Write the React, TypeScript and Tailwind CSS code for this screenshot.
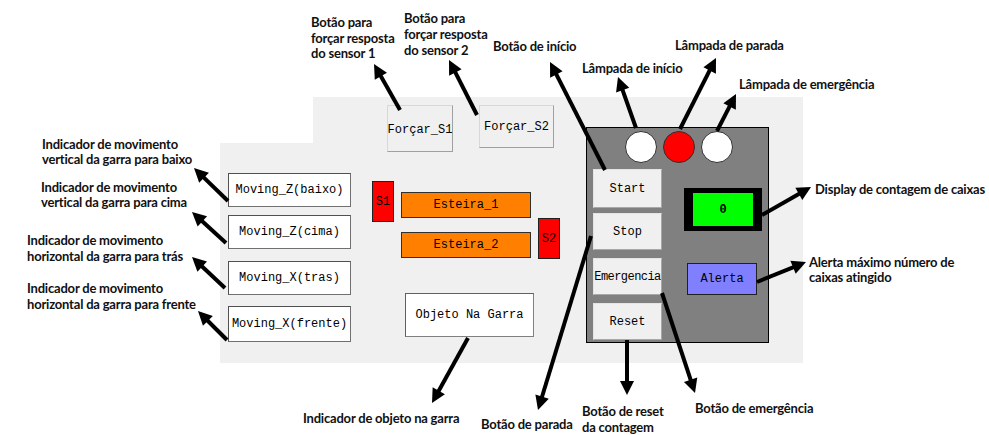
import React from "react";

type Pt = { x1: number; y1: number; x2: number; y2: number };

const arrows: Pt[] = [
  { x1: 228, y1: 201, x2: 194, y2: 168 },
  { x1: 226, y1: 243, x2: 192, y2: 212 },
  { x1: 225, y1: 288, x2: 192, y2: 257 },
  { x1: 227, y1: 340, x2: 198, y2: 311 },
  { x1: 400, y1: 110, x2: 374, y2: 64 },
  { x1: 477, y1: 115, x2: 449, y2: 60 },
  { x1: 605, y1: 170, x2: 550, y2: 62 },
  { x1: 636, y1: 128, x2: 618, y2: 77 },
  { x1: 680, y1: 129, x2: 716, y2: 58 },
  { x1: 717, y1: 131, x2: 736, y2: 94 },
  { x1: 762, y1: 215, x2: 811, y2: 187 },
  { x1: 757, y1: 282, x2: 806, y2: 262 },
  { x1: 468, y1: 338, x2: 432, y2: 403 },
  { x1: 591, y1: 236, x2: 538, y2: 410 },
  { x1: 627, y1: 340, x2: 627, y2: 395 },
  { x1: 662, y1: 293, x2: 695, y2: 393 },
];

function Arrow({ x1, y1, x2, y2 }: Pt) {
  const dx = x2 - x1;
  const dy = y2 - y1;
  const len = Math.hypot(dx, dy);
  const ux = dx / len;
  const uy = dy / len;
  const hl = 14;
  const hw = 7;
  const bx = x2 - ux * hl;
  const by = y2 - uy * hl;
  const px = -uy;
  const py = ux;
  const pts = `${x2},${y2} ${bx + px * hw},${by + py * hw} ${bx - px * hw},${by - py * hw}`;
  return (
    <g>
      <line x1={x1} y1={y1} x2={bx + ux * 2} y2={by + uy * 2} stroke="#000" strokeWidth={4} />
      <polygon points={pts} fill="#000" />
    </g>
  );
}

type Label = { x: number; y: number; lines: string[]; lh?: number };

const labels: Label[] = [
  { x: 42, y: 137, lines: ["Indicador de movimento", "vertical da garra para baixo"] },
  { x: 41, y: 180, lines: ["Indicador de movimento", "vertical da garra para cima"] },
  { x: 27, y: 232, lines: ["Indicador de movimento", "horizontal da garra para trás"], lh: 16 },
  { x: 27, y: 280, lines: ["Indicador de movimento", "horizontal da garra para frente"], lh: 16 },
  { x: 311, y: 15, lines: ["Botão para", "forçar resposta", "do sensor 1"], lh: 15.5 },
  { x: 404, y: 10, lines: ["Botão para", "forçar resposta", "do sensor 2"], lh: 16 },
  { x: 493, y: 39, lines: ["Botão de início"] },
  { x: 582, y: 61, lines: ["Lâmpada de início"] },
  { x: 675, y: 38, lines: ["Lâmpada de parada"] },
  { x: 739, y: 77, lines: ["Lâmpada de emergência"] },
  { x: 815, y: 182, lines: ["Display de contagem de caixas"] },
  { x: 809, y: 255, lines: ["Alerta máximo número de", "caixas atingido"] },
  { x: 303, y: 411, lines: ["Indicador de objeto na garra"] },
  { x: 481, y: 417, lines: ["Botão de parada"] },
  { x: 582, y: 403, lines: ["Botão de reset", "da contagem"], lh: 16 },
  { x: 695, y: 401, lines: ["Botão de emergência"] },
];

const mono = "font-['Liberation_Mono','DejaVu_Sans_Mono',monospace] text-[12px] text-black";

function MovingBox({ text, h, mt }: { text: string; h: string; mt: string }) {
  return (
    <div
      className={`${h} ${mt} w-[123px] bg-white border border-[#505050] border-r-[#707070] border-b-[#707070] flex items-center justify-center whitespace-nowrap ${mono}`}
    >
      {text}
    </div>
  );
}

function PanelButton({ text, h, mt, tight }: { text: string; h: string; mt: string; tight?: boolean }) {
  return (
    <div
      className={`${h} ${mt} w-[69px] bg-[#f0f0f0] border border-[#e4e4e4] border-r-[#a8a8a8] border-b-[#a8a8a8] flex items-center justify-center overflow-hidden whitespace-nowrap ${mono} ${tight ? "tracking-[-0.55px]" : ""}`}
    >
      {text}
    </div>
  );
}

export default function App() {
  return (
    <div className="relative w-[989px] h-[435px] bg-white overflow-hidden">
      {/* HMI panel */}
      <div className="ml-[220px] pt-[97px]">
        <div className="w-[583px] h-[266px] bg-[#f0f0f0] flex items-start [clip-path:polygon(93px_0,100%_0,100%_100%,0_100%,0_46px,93px_46px)]">
          {/* Column A: moving indicators */}
          <div className="ml-[8px] mt-[76px] flex flex-col">
            <MovingBox text="Moving_Z(baixo)" h="h-[34px]" mt="mt-0" />
            <MovingBox text="Moving_Z(cima)" h="h-[34px]" mt="mt-[8px]" />
            <MovingBox text="Moving_X(tras)" h="h-[34px]" mt="mt-[12px]" />
            <MovingBox text="Moving_X(frente)" h="h-[36px]" mt="mt-[11px]" />
          </div>

          {/* Column B: force buttons, conveyors, object */}
          <div className="ml-[21px] w-[188px] flex flex-col">
            <div className="mt-[8px] ml-[15px] flex items-start">
              <div className={`w-[66px] h-[47px] bg-[#f0f0f0] border border-[#d8d8d8] border-r-[#a0a0a0] border-b-[#a0a0a0] flex items-center justify-center pt-[2px] whitespace-nowrap ${mono}`}>
                Forçar_S1
              </div>
              <div className={`ml-[26px] w-[75px] h-[43px] bg-[#f0f0f0] border border-[#d8d8d8] border-r-[#a0a0a0] border-b-[#a0a0a0] flex items-center justify-center whitespace-nowrap ${mono}`}>
                Forçar_S2
              </div>
            </div>

            <div className="mt-[29px] flex items-start">
              <div className={`w-[22px] h-[41px] bg-[#ff0000] border border-[#202020] flex items-center justify-center ${mono}`}>
                S1
              </div>
              <div className="ml-[7px] mt-[11px] flex flex-col">
                <div className={`w-[130px] h-[26px] bg-[#ff8000] border border-[#303030] flex items-center justify-center ${mono}`}>
                  Esteira_1
                </div>
                <div className={`mt-[14px] w-[130px] h-[26px] bg-[#ff8000] border border-[#303030] flex items-center justify-center ${mono}`}>
                  Esteira_2
                </div>
              </div>
              <div className={`ml-[7px] mt-[37px] w-[22px] h-[41px] bg-[#ff0000] border border-[#202020] flex items-center justify-center ${mono}`}>
                S2
              </div>
            </div>

            <div className={`mt-[34px] ml-[33px] w-[129px] h-[44px] bg-white border border-[#606060] border-b-[#808080] border-r-[#808080] flex items-center justify-center whitespace-nowrap ${mono}`}>
              Objeto Na Garra
            </div>
          </div>

          {/* Control box */}
          <div className="ml-[26px] mt-[30px] w-[183px] h-[216px] bg-[#808080] border border-black flex flex-col">
            <div className="ml-[38px] mt-[3px] flex gap-[6px]">
              <div className="w-[32px] h-[32px] rounded-full bg-white border border-[#303030]" />
              <div className="w-[32px] h-[32px] rounded-full bg-[#ff0000] border border-[#303030]" />
              <div className="w-[32px] h-[32px] rounded-full bg-white border border-[#303030]" />
            </div>
            <div className="flex items-start">
              <div className="ml-[6px] mt-[6px] flex flex-col">
                <PanelButton text="Start" h="h-[39px]" mt="mt-0" />
                <PanelButton text="Stop" h="h-[37px]" mt="mt-[5px]" />
                <PanelButton text="Emergencia" h="h-[37px]" mt="mt-[8px]" tight />
                <PanelButton text="Reset" h="h-[37px]" mt="mt-[8px]" />
              </div>
              <div className="ml-[22px] mt-[25px] flex flex-col">
                <div className="w-[78px] h-[43px] bg-black flex items-center justify-center">
                  <div className={`w-[60px] h-[33px] bg-[#00ff00] flex items-center justify-center font-bold ${mono}`}>0</div>
                </div>
                <div className={`ml-[3px] mt-[32px] w-[70px] h-[32px] bg-[#8080ff] border border-[#202020] flex items-center justify-center ${mono}`}>
                  Alerta
                </div>
              </div>
            </div>
          </div>
        </div>
      </div>

      {/* Annotations */}
      {labels.map((l, i) => (
        <div
          key={i}
          className="absolute whitespace-nowrap font-['Lato','Open_Sans',sans-serif] font-bold text-[13px] tracking-[-0.2px] text-[#111]"
          style={{ left: l.x, top: l.y, lineHeight: `${l.lh ?? 15}px` }}
        >
          {l.lines.map((t, j) => (
            <div key={j}>{t}</div>
          ))}
        </div>
      ))}

      <svg className="absolute left-0 top-0 pointer-events-none" width={989} height={435}>
        {arrows.map((a, i) => (
          <Arrow key={i} {...a} />
        ))}
      </svg>
    </div>
  );
}
